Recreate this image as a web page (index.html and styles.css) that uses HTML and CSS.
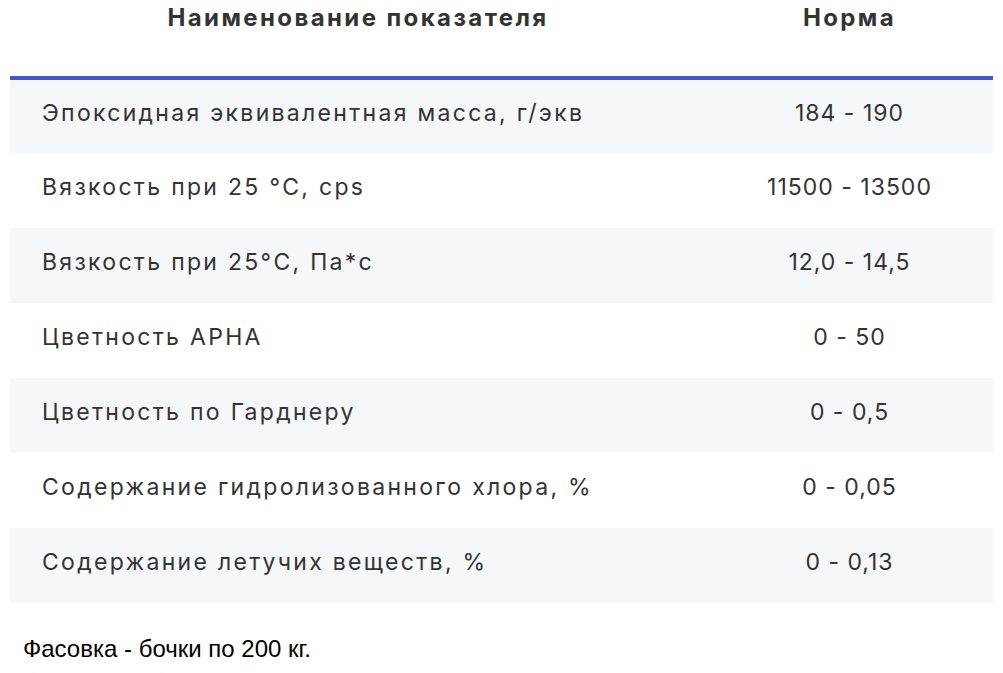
FILE: index.html
```html
<!DOCTYPE html>
<html lang="ru">
<head>
<meta charset="utf-8">
<title>Показатели</title>
<link rel="stylesheet" href="styles.css">
</head>
<body>
<table class="spec">
  <thead>
    <tr>
      <th class="col-name">Наименование показателя</th>
      <th class="col-norm">Норма</th>
    </tr>
  </thead>
  <tbody>
    <tr><td class="name">Эпоксидная эквивалентная масса, г/экв</td><td class="norm">184 - 190</td></tr>
    <tr><td class="name">Вязкость при 25 °C, cps</td><td class="norm">11500 - 13500</td></tr>
    <tr><td class="name">Вязкость при 25°C, Па*с</td><td class="norm">12,0 - 14,5</td></tr>
    <tr><td class="name">Цветность APHA</td><td class="norm">0 - 50</td></tr>
    <tr><td class="name">Цветность по Гарднеру</td><td class="norm">0 - 0,5</td></tr>
    <tr><td class="name">Содержание гидролизованного хлора, %</td><td class="norm">0 - 0,05</td></tr>
    <tr><td class="name">Содержание летучих веществ, %</td><td class="norm">0 - 0,13</td></tr>
  </tbody>
</table>
<p class="note">Фасовка - бочки по 200 кг.</p>
</body>
</html>
```
FILE: styles.css
```css
html, body {
  margin: 0;
  padding: 0;
  background: #ffffff;
}

.spec {
  margin: 0 10px;
  width: 983px;
  border-collapse: collapse;
  font-family: Inter, "Noto Sans", sans-serif;
  color: #333333;
}

.spec th {
  height: 78px;
  padding: 3px 0 0;
  vertical-align: top;
  font-size: 24px;
  font-weight: 700;
  letter-spacing: 2.4px;
  text-align: center;
  border-bottom: 4px solid #4556cc;
  box-sizing: border-box;
}

.col-name { width: 696px; }
.col-norm { width: 287px; }

.spec td {
  height: 75px;
  padding: 0 0 8px;
  font-size: 23px;
  font-weight: 400;
  vertical-align: middle;
  box-sizing: border-box;
}

.spec tbody tr:nth-child(odd) td { background: #f6f7f9; }

.spec td.name {
  padding-left: 32px;
  text-align: left;
  letter-spacing: 2.3px;
}

.spec td.norm {
  text-align: center;
  letter-spacing: 1px;
}

.note {
  margin: 32px 0 0 23px;
  font-family: "Liberation Sans", Arial, sans-serif;
  font-size: 24px;
  color: #000000;
}
```
